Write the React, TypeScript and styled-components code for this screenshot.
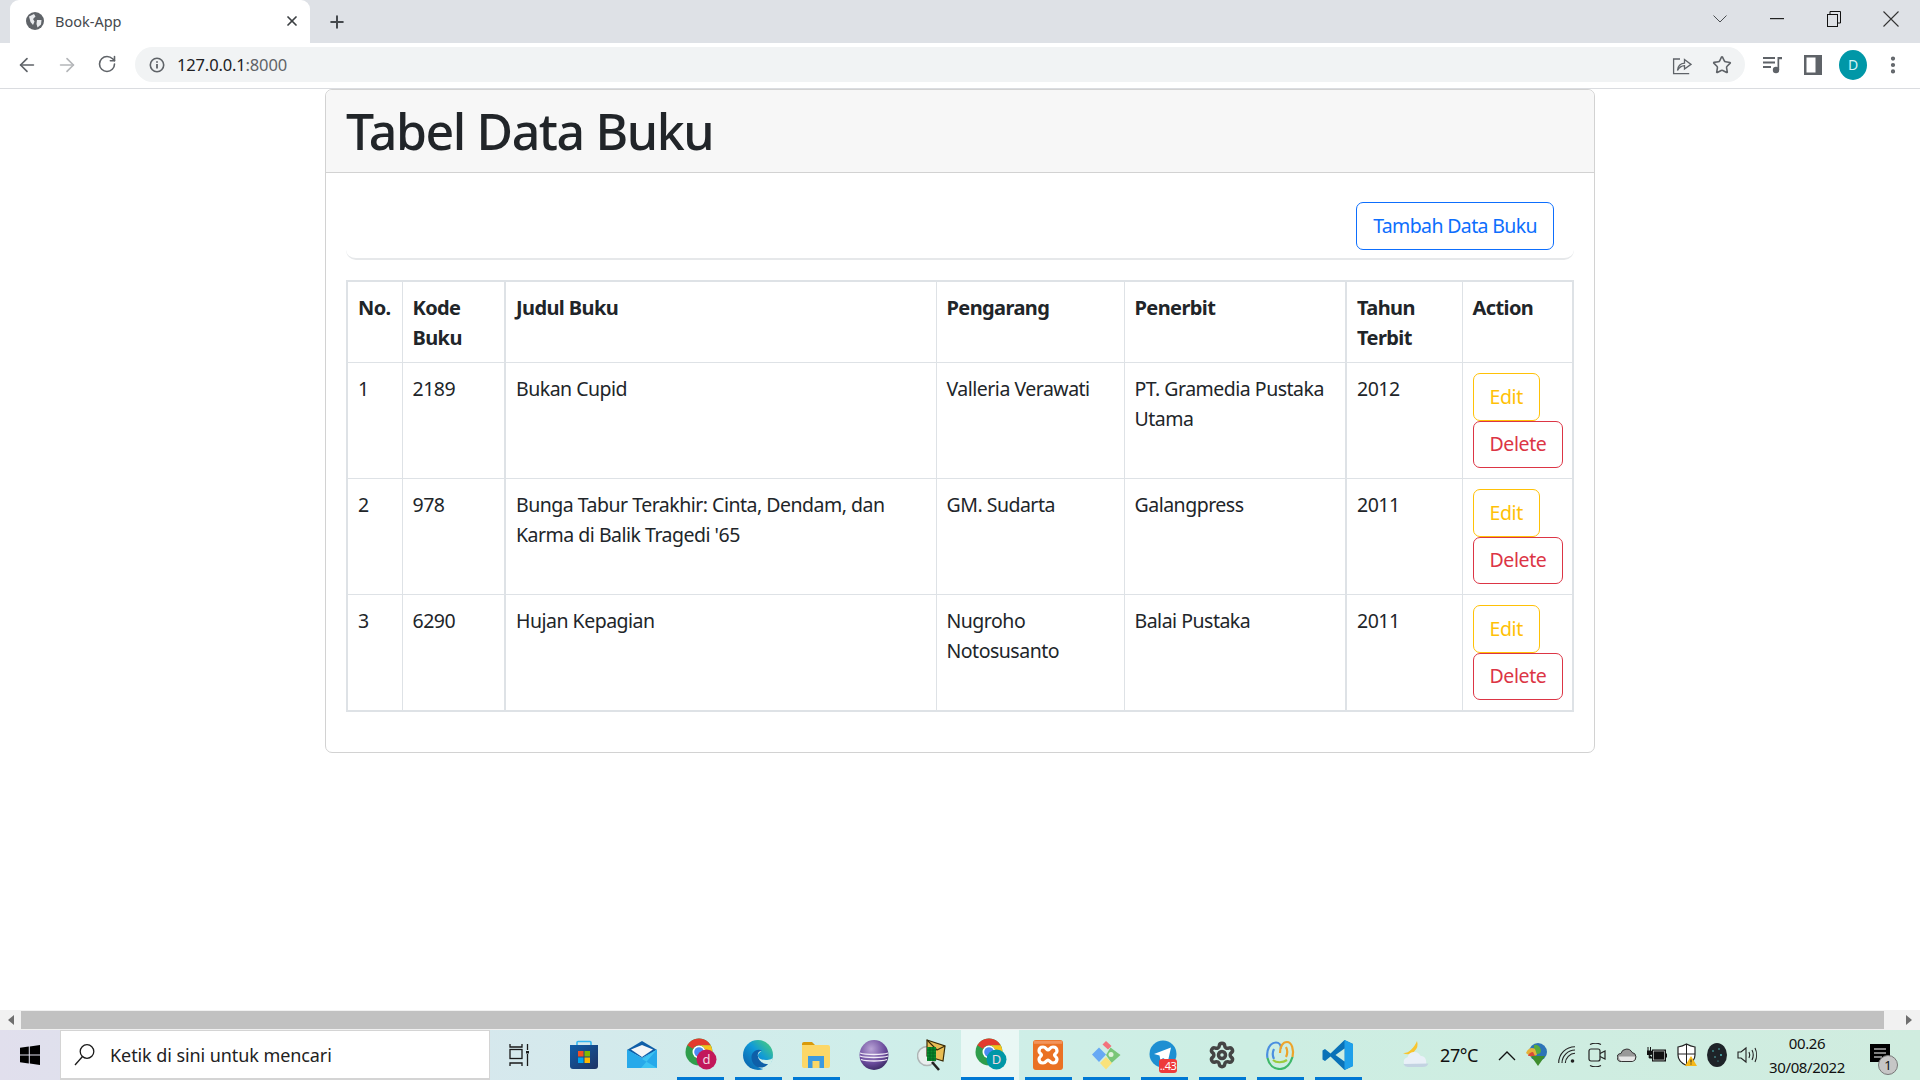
import React from "react";
import styled, { createGlobalStyle } from "styled-components";
import { ArrowLeft, ArrowRight, RotateCw, Star, MoreVertical, Plus, X, Settings } from "lucide-react";

const UI = `"Noto Sans", "Open Sans", "Liberation Sans", sans-serif`;

const Global = createGlobalStyle`
  html, body { margin: 0; padding: 0; height: 100%; overflow: hidden; background: #fff; }
  #root { height: 100%; }
  * { box-sizing: border-box; }
`;

const Screen = styled.div`
  width: 1920px;
  height: 1080px;
  display: flex;
  flex-direction: column;
  font-family: ${UI};
  color: #212529;
  overflow: hidden;
`;

/* ---------- browser chrome ---------- */
const TabStrip = styled.div`
  height: 43px;
  flex: none;
  background: #dee1e6;
  display: flex;
  align-items: flex-end;
  padding-left: 10px;
`;
const Tab = styled.div`
  width: 300px;
  height: 43px;
  background: #fff;
  border-radius: 9px 9px 0 0;
  display: flex;
  align-items: center;
  padding: 0 10px 2px 16px;
  gap: 11px;
  font-size: 14.5px;
  letter-spacing: 0;
  color: #45494d;
`;
const TabTitle = styled.span`
  flex: 1;
`;
const NewTab = styled.div`
  margin-left: 17px;
  height: 43px;
  width: 22px;
  display: flex;
  align-items: center;
  color: #45494d;
`;
const WindowControls = styled.div`
  margin-left: auto;
  height: 38px;
  align-self: flex-start;
  display: flex;
  align-items: center;
  color: #2c2c2c;
`;
const WinButton = styled.div<{ $w: number }>`
  width: ${(p) => p.$w}px;
  display: flex;
  justify-content: center;
  align-items: center;
`;
const Toolbar = styled.div`
  height: 46px;
  flex: none;
  background: #fff;
  border-bottom: 1px solid #dadce0;
  display: flex;
  align-items: center;
  padding: 0 15px 2px 0;
  color: #5f6368;
`;
const NavButton = styled.div<{ $w: number; $dim?: boolean }>`
  width: ${(p) => p.$w}px;
  flex: none;
  display: flex;
  justify-content: center;
  color: ${(p) => (p.$dim ? "#b4b6b9" : "#5f6368")};
`;
const NavGroup = styled.div`
  width: 135px;
  flex: none;
  display: flex;
  padding-left: 7px;
`;
const Omnibox = styled.div`
  width: 1610px;
  height: 35px;
  flex: none;
  background: #f1f3f4;
  border-radius: 18px;
  display: flex;
  align-items: center;
  padding: 0 3px 0 14px;
`;
const Url = styled.div`
  margin-left: 12px;
  flex: 1;
  font-size: 16.5px;
  letter-spacing: -0.15px;
  color: #202124;
`;
const UrlPort = styled.span`
  color: #5f6368;
`;
const OmniAction = styled.div`
  width: 40px;
  display: flex;
  justify-content: center;
`;
const ToolGroup = styled.div`
  flex: 1;
  display: flex;
  align-items: center;
  padding-left: 8px;
`;
const ToolSlot = styled.div`
  width: 40px;
  display: flex;
  justify-content: center;
  align-items: center;
`;
const Avatar = styled.div`
  width: 28px;
  height: 30px;
  border-radius: 50%;
  background: #0097a7;
  color: #d7f3f6;
  font-size: 14px;
  display: flex;
  align-items: center;
  justify-content: center;
`;

/* ---------- page ---------- */
const Page = styled.main`
  flex: 1;
  min-height: 0;
  background: #fff;
  overflow: hidden;
`;
const Card = styled.section`
  width: 1270px;
  margin: 0 auto;
  height: 664px;
  border: 1px solid #d2d2d2;
  border-radius: 7px;
`;
const CardHeader = styled.header`
  height: 83px;
  background: #f7f7f7;
  border-bottom: 1px solid #d2d2d2;
  border-radius: 7px 7px 0 0;
  padding: 11px 20px 0;
`;
const Title = styled.h1`
  margin: 0;
  font-size: 50px;
  line-height: 60px;
  font-weight: 500;
  letter-spacing: -1.4px;
  color: #212529;
`;
const CardBody = styled.div`
  padding: 19px 20px 0;
`;
const ActionBar = styled.div`
  height: 68px;
  border-bottom: 2px solid #e6e8ea;
  border-radius: 0 0 10px 10px;
  padding: 10px 20px 0;
  display: flex;
  justify-content: flex-end;
  margin-bottom: 20px;
`;
const Btn = styled.button<{ $color: string }>`
  display: block;
  height: 47.5px;
  padding: 0 16px;
  border: 1px solid ${(p) => p.$color};
  border-radius: 7px;
  background: transparent;
  color: ${(p) => p.$color};
  font-family: ${UI};
  font-size: 19.5px;
  letter-spacing: -0.4px;
  line-height: 30px;
`;
const AddBtn = styled(Btn)`
  letter-spacing: -0.63px;
`;
const Table = styled.table`
  width: 1226px;
  table-layout: fixed;
  border-collapse: collapse;
  border: 2px solid #dee2e6;
  font-size: 19.5px;
  line-height: 30px;
  letter-spacing: -0.5px;
`;
const Th = styled.th<{ $thick?: boolean }>`
  text-align: left;
  vertical-align: top;
  font-size: 20px;
  font-weight: 700;
  letter-spacing: -0.6px;
  padding: 11px 10px 9px 10px;
  border: 1px solid #dee2e6;
  border-left-width: ${(p) => (p.$thick ? 2 : 1)}px;
`;
const Td = styled.td<{ $thick?: boolean }>`
  vertical-align: top;
  font-weight: 400;
  padding: 11px 10px 9px;
  height: 116px;
  border: 1px solid #dee2e6;
  border-left-width: ${(p) => (p.$thick ? 2 : 1)}px;
`;
const RowActions = styled.div`
  display: flex;
  flex-direction: column;
  align-items: flex-start;
  margin-top: -1px;
`;

/* ---------- scrollbar ---------- */
const HScroll = styled.div`
  height: 20px;
  flex: none;
  background: #f1f1f1;
  display: flex;
  align-items: center;
`;
const ScrollEnd = styled.div`
  width: 21px;
  flex: none;
  display: flex;
  justify-content: center;
  color: #6e6e6e;
`;
const ScrollRight = styled(ScrollEnd)`
  width: 36px;
  padding-left: 14px;
`;
const Thumb = styled.div`
  flex: 1;
  height: 18px;
  background: #c1c1c1;
`;

/* ---------- taskbar ---------- */
const Taskbar = styled.footer`
  height: 50px;
  flex: none;
  display: flex;
  align-items: stretch;
  background: linear-gradient(90deg, #e1dfed 0%, #d6e8ed 25%, #cfeeea 45%, #cdeee3 65%, #d0ecdf 100%);
  color: #111;
`;
const StartButton = styled.div`
  width: 60px;
  flex: none;
  display: flex;
  align-items: center;
  justify-content: center;
`;
const SearchBox = styled.div`
  width: 430px;
  flex: none;
  background: #fff;
  border: 1px solid #d4d4d4;
  border-bottom-width: 2px;
  display: flex;
  align-items: center;
  padding-left: 13px;
  gap: 15px;
  font-size: 18px;
  letter-spacing: -0.08px;
  color: #222;
`;
const TaskView = styled.div`
  width: 65px;
  flex: none;
  display: flex;
  align-items: center;
  justify-content: center;
  padding-right: 7px;
`;
const Slot = styled.div<{ $open?: boolean; $active?: boolean }>`
  position: relative;
  width: 58px;
  flex: none;
  display: flex;
  align-items: center;
  justify-content: center;
  padding-bottom: 1px;
  background: ${(p) => (p.$active ? "rgba(255,255,255,.55)" : "transparent")};
  &::after {
    content: "";
    display: ${(p) => (p.$open ? "block" : "none")};
    position: absolute;
    left: ${(p) => (p.$active ? 0 : 6)}px;
    right: 5px;
    bottom: 0;
    height: 3px;
    background: #0078d4;
  }
`;
const Tray = styled.div`
  margin-left: auto;
  display: flex;
  align-items: center;
`;
const Weather = styled.div`
  display: flex;
  align-items: center;
  gap: 11px;
  width: 92px;
  padding-left: 1px;
  font-size: 18px;
  letter-spacing: -0.4px;
`;
const TrayIcon = styled.div`
  width: 30px;
  display: flex;
  justify-content: center;
  align-items: center;
  flex: none;
`;
const Clock = styled.div`
  width: 90px;
  text-align: center;
  font-size: 15px;
  line-height: 24px;
  letter-spacing: -0.4px;
`;
const Notify = styled.div`
  width: 68px;
  height: 24px;
  position: relative;
  display: flex;
  justify-content: center;
  padding-right: 12px;
`;
const NotifyBadge = styled.span`
  position: absolute;
  left: 26px;
  top: 12px;
  width: 20px;
  height: 20px;
  border-radius: 50%;
  background: #c6c6c6;
  border: 1px solid #777;
  font-size: 13px;
  line-height: 18px;
  text-align: center;
  color: #111;
`;

/* ---------- drawings ---------- */
const Globe = () => (
  <svg width="18" height="18" viewBox="0 0 18 18">
    <circle cx="9" cy="9" r="9" fill="#5f6368" />
    <path d="M3 4.5 L8 2 L9.5 4.5 L7 7 L8.5 9.5 L7 13 L4.5 10 Z M11 8 L15.5 8 L15 12.5 L11.5 15.5 L10.5 12 Z" fill="#e8eaed" />
  </svg>
);
const InfoIcon = () => (
  <svg width="16" height="16" viewBox="0 0 16 16" fill="none" stroke="#5f6368">
    <circle cx="8" cy="8" r="6.7" strokeWidth="1.6" />
    <path d="M8 7v4.6M8 4.2v1.6" strokeWidth="1.8" />
  </svg>
);
const ShareIcon = () => (
  <svg width="20" height="20" viewBox="0 0 20 20" fill="none" stroke="#5f6368" strokeWidth="1.3">
    <path d="M8 4H1.6v14.6h15.6" />
    <path d="M5.5 15.5c.4-4.5 3-7 7-7.3V4.6l6.5 4.8-6.5 4.6v-3.3c-3 .1-5 1.400-7 4.800z" />
  </svg>
);
const MediaIcon = () => (
  <svg width="20" height="18" viewBox="0 0 20 18" fill="#5f6368">
    <rect x="0" y="1" width="12" height="2" />
    <rect x="0" y="5.500" width="12" height="2" />
    <rect x="0" y="10" width="8" height="2" />
    <circle cx="13" cy="14" r="3.200" />
    <path d="M14.500 14V1H19V3.200H16.200V14z" />
  </svg>
);
const PanelIcon = () => (
  <svg width="18" height="20" viewBox="0 0 18 20">
    <rect width="18" height="20" fill="#5f6368" />
    <rect x="2.500" y="2.500" width="9" height="15" fill="#fff" />
  </svg>
);
const Chevron = () => (
  <svg width="14" height="8" viewBox="0 0 14 8" fill="none" stroke="#4a4d51">
    <path d="M.5.5 7 7 13.500.5" />
  </svg>
);
const MinIcon = () => (
  <svg width="14" height="2" viewBox="0 0 14 2"><rect width="14" height="1.200" fill="#222" /></svg>
);
const MaxIcon = () => (
  <svg width="14" height="16" viewBox="0 0 14 16" fill="none" stroke="#111" strokeWidth="1">
    <rect x=".5" y="3.500" width="10" height="12" fill="none" />
    <path d="M3 3.500V.5h10.500v11.500h-3" />
  </svg>
);
const CloseIcon = () => (
  <svg width="16" height="16" viewBox="0 0 16 16" fill="none" stroke="#333" strokeWidth="1.100">
    <path d="M.5.5l15 15M15.500.5l-15 15" />
  </svg>
);
const ArrowGlyph = ({ right }: { right?: boolean }) => (
  <svg width="6" height="10" viewBox="0 0 6 10" fill="currentColor">
    <path d={right ? "M0 0l6 5-6 5z" : "M6 0L0 5l6 5z"} />
  </svg>
);
const WinLogo = () => (
  <svg width="20" height="20" viewBox="0 0 20 20" fill="#000">
    <path d="M0 2.800 8.800 1.500V9.400H0zM9.800 1.400 20 0V9.400H9.800zM0 10.500H8.800V18.400L0 17.200zM9.800 10.500H20V20L9.800 18.500z" />
  </svg>
);
const SearchGlyph = () => (
  <svg width="21" height="24" viewBox="0 0 21 24" fill="none" stroke="#1a1a1a" strokeWidth="1.300">
    <circle cx="13" cy="8.500" r="6.800" />
    <path d="M8.500 13.500 1 22" />
  </svg>
);
const TaskViewGlyph = () => (
  <svg width="20" height="24" viewBox="0 0 20 24" fill="none" stroke="#1a1a1a" strokeWidth="1.300">
    <rect x="1" y="6.500" width="12" height="9" />
    <path d="M1 1v3h12V1M1 23v-3h12v3M18.500 1v6M18.500 11v12" />
    <rect x="17" y="8" width="3" height="2.500" fill="#1a1a1a" stroke="none" />
  </svg>
);
const StoreIcon = () => (
  <svg width="30" height="30" viewBox="0 0 30 30">
    <path d="M8 6V2.500a1 1 0 0 1 1-1h12a1 1 0 0 1 1 1V6" fill="none" stroke="#35b6f0" strokeWidth="1.600" />
    <defs><linearGradient id="st" x1="0" y1="0" x2="1" y2="1"><stop offset="0" stopColor="#0f5ea8" /><stop offset="1" stopColor="#1e3364" /></linearGradient></defs>
    <path d="M1 5h28v21a3 3 0 0 1-3 3H4a3 3 0 0 1-3-3z" fill="url(#st)" />
    <rect x="9" y="11" width="5.500" height="5.500" fill="#f25022" />
    <rect x="15.500" y="11" width="5.500" height="5.500" fill="#7fba00" />
    <rect x="9" y="17.500" width="5.500" height="5.500" fill="#00a4ef" />
    <rect x="15.500" y="17.500" width="5.500" height="5.500" fill="#ffb900" />
  </svg>
);
const MailIcon = () => (
  <svg width="30" height="30" viewBox="0 0 30 30">
    <path d="M15 1 30 10 15 18 0 10z" fill="#0f5ea8" />
    <path d="M4 9.500 15 5 26 9.500 15 17z" fill="#f4f6f8" />
    <path d="M0 9.500 15 18 30 9.500V28H0z" fill="#27a9ea" />
    <path d="M30 9.500 15 19 30 28H14z" fill="#3dc3f2" />
  </svg>
);
const ChromeIcon = ({ letter, badge }: { letter: string; badge: string }) => (
  <svg width="33" height="33" viewBox="-1 0 33 33">
    <circle cx="14" cy="14" r="13.500" fill="#2f9e4c" />
    <path d="M2.300 7.300A13.500 13.500 0 0 1 25.700 7.300H14a7 7 0 0 0-6.100 3.500z" fill="#e33b2e" />
    <path d="M25.700 7.300A13.500 13.500 0 0 1 14 27.500L20 17a7 7 0 0 0-6-9.700z" fill="#f9c21a" />
    <circle cx="14" cy="14" r="6.500" fill="#fff" />
    <circle cx="14" cy="14" r="4.800" fill="#4a8af4" />
    <circle cx="21.500" cy="21.500" r="10" fill={badge} />
    <text x="21.500" y="26" fontSize="13" textAnchor="middle" fill="#f2d9e2" fontFamily="Noto Sans, sans-serif">{letter}</text>
  </svg>
);
const EdgeIcon = () => (
  <svg width="30" height="30" viewBox="0 0 30 30">
    <defs>
      <linearGradient id="ed" x1="0" y1="1" x2="1" y2="0"><stop offset="0" stopColor="#0a5aa5" /><stop offset=".55" stopColor="#109ad8" /><stop offset="1" stopColor="#54d66b" /></linearGradient>
    </defs>
    <circle cx="15" cy="15" r="15" fill="url(#ed)" />
    <path d="M30 17c0 2-3.500 3-7 3-3.500 0-8-1-8-4.500 0-2 2-3.500 3.500-4-4.500-1-9 1.500-9 6.500 0 5 5 10.500 11 11 4.500-.5 8-4 9.500-12z" fill="#cfeeea" />
    <path d="M21 27c-6 2-12-1.500-12.500-9C8 12 14 8 19 10.500c-3 .3-4.500 2.500-4.200 5 .4 5 4.500 8.500 10.200 8.500-1 1.200-2.400 2.300-4 3z" fill="#0e5fa8" />
  </svg>
);
const FolderIcon = () => (
  <svg width="28" height="26" viewBox="0 0 28 26">
    <path d="M0 2a2 2 0 0 1 2-2h8l3 3H0z" fill="#d99a0a" />
    <path d="M0 3h26a2 2 0 0 1 2 2v19a2 2 0 0 1-2 2H2a2 2 0 0 1-2-2z" fill="#fcd767" />
    <path d="M6 26V14h16v12h-4.500v-7h-7v7z" fill="#3c9ae0" />
  </svg>
);
const EclipseIcon = () => (
  <svg width="30" height="30" viewBox="0 0 30 30">
    <defs>
      <radialGradient id="ec" cx=".4" cy=".3" r=".8"><stop offset="0" stopColor="#b9a4d6" /><stop offset=".6" stopColor="#6a4b9c" /><stop offset="1" stopColor="#2f2255" /></radialGradient>
    </defs>
    <ellipse cx="15" cy="15" rx="14.500" ry="15" fill="url(#ec)" />
    <path d="M1 13c6 2 22 2 28 0M.8 16c6 2 22 2 28.400 0M2 19.500c6 2 20 2 26 0" fill="none" stroke="#f2edf8" strokeWidth="1.300" />
  </svg>
);
const MagMailIcon = () => (
  <svg width="30" height="32" viewBox="0 0 30 32">
    <circle cx="10" cy="17" r="9.500" fill="#e9eeee" stroke="#aeb5b5" strokeWidth="1.500" />
    <path d="M15 23 22 31" stroke="#222" strokeWidth="2.500" />
    <path d="M10 1 28 7 26 22 10 17z" fill="#e8bd54" stroke="#3a2c08" strokeWidth="1.200" />
    <path d="M10 1 20 11 28 7" fill="none" stroke="#3a2c08" strokeWidth="1.200" />
    <path d="M10 8h9v14h-9z" fill="#0a8a2a" />
    <path d="M10 11h9M10 14h9M10 17h9M10 20h9M13 8v14M16 8v14" stroke="#062" strokeWidth="1" />
  </svg>
);
const XamppIcon = () => (
  <svg width="30" height="30" viewBox="0 0 30 30">
    <rect width="30" height="30" rx="3" fill="#ea7124" />
    <rect x=".8" y=".8" width="28.400" height="3" fill="#f2935a" />
    <path d="M10 7c3 0 3.500 3 5 3s2-3 5-3 4 2 4 4-2.500 3-2.500 4 2.500 2 2.500 4-1 4-4 4-3.500-3-5-3-2 3-5 3-4-2-4-4 2.500-3 2.500-4S6 13 6 11s1-4 4-4z" fill="none" stroke="#fff" strokeWidth="3.200" />
  </svg>
);
const DiamondIcon = () => (
  <svg width="30" height="30" viewBox="0 0 30 30">
    <path d="M15 1 20.500 6 17 9.500 11.500 4.500z" fill="#f3727c" />
    <path d="M8 7.500 15 14.500 8 22 1 14.500z" fill="#67a9f4" />
    <path d="M19.500 7.500 29.500 15 20.500 23 15 15z" fill="#79c678" />
    <circle cx="20" cy="14.500" r="2.500" fill="#e0f2dc" />
    <path d="M15 17 21 23 15 29.500 9 23z" fill="#f9e27a" />
  </svg>
);
const TelegramIcon = () => (
  <svg width="30" height="30" viewBox="0 0 30 30">
    <circle cx="14" cy="14" r="13.500" fill="#1e8fd2" />
    <path d="M5 14 22 7.500 19 21l-5-3-2.500 2.500-1-5z" fill="#fff" />
  </svg>
);
const TgBadge = styled.span`
  position: absolute;
  left: 24px;
  top: 29px;
  width: 18px;
  height: 14px;
  border-radius: 3px;
  background: #ee3b3b;
  color: #fff;
  font-size: 11px;
  line-height: 14px;
  text-align: center;
  letter-spacing: -0.5px;
`;
const RingsIcon = () => (
  <svg width="30" height="30" viewBox="0 0 30 30" fill="none" strokeWidth="2.200">
    <path d="M2.500 18C1 10 5 2.500 11 2.500c3 0 5 2.500 5 6" stroke="#4a8fe0" />
    <path d="M9 9c-1.500 3-1.500 7 0 10" stroke="#4a8fe0" />
    <path d="M15 13C15 6 18 2 22 2c5 0 7 8 5.500 15" stroke="#eda42c" />
    <path d="M21 7c1.500 3 1.500 7 0 10" stroke="#eda42c" />
    <path d="M2.500 18C4 25 9 29 15 29s10-4 12.500-12" stroke="#3fb86a" />
    <path d="M8 20c3 3 10 3 14 0" stroke="#9ccb3f" />
  </svg>
);
const VSCodeIcon = () => (
  <svg width="32" height="32" viewBox="0 0 32 32">
    <path d="M22.500 1 31 5v22l-8.500 4-14-13.500L3 22l-2.500-1.500V11.500L3 10l5.500 4.500z" fill="#0a72b8" />
    <path d="M22.500 1 31 5v22l-8.500 4z" fill="#1fa0ea" />
    <path d="M22.500 9.500 13.500 16l9 6.500z" fill="#cdeee3" />
  </svg>
);
const WeatherIcon = () => (
  <svg width="28" height="30" viewBox="0 0 28 30">
    <path d="M16 1A10 10 0 0 1 2 13c5 1 11-5 14-12z" fill="#f9c52f" />
    <path d="M7 27a5 5 0 0 1-.5-9.800 7 7 0 0 1 13-1.500A6 6 0 0 1 22 27z" fill="#e9f0f8" />
    <path d="M2.500 24a5 5 0 0 0 4.500 3h15a6 6 0 0 0 5.500-3.500z" fill="#c3d3e2" />
  </svg>
);
const CaretUp = () => (
  <svg width="18" height="11" viewBox="0 0 18 11" fill="none" stroke="#111" strokeWidth="1.300">
    <path d="M1 10 9 2l8 8" />
  </svg>
);
const IdmIcon = () => (
  <svg width="22" height="24" viewBox="0 0 22 24">
    <circle cx="12" cy="9" r="9" fill="#2d74b8" />
    <path d="M8 2c4-1 7 3 7 6s-4 4-7 2z" fill="#5aaa3c" />
    <path d="M0 10c2-5 6-6 9-4l2 6-6 2z" fill="#e4b23a" />
    <path d="M2 13c1-3 3-4 5-4l2 4z" fill="#d8483a" />
    <path d="M5 13h14l-7 10z" fill="#3f8d2e" />
  </svg>
);
const WifiIcon = () => (
  <svg width="18" height="18" viewBox="0 0 18 18" fill="none" stroke="#222" strokeWidth="1.100">
    <path d="M.7 17C.7 8 8 .7 17 .7M4 17C4 10 10 4 17 4M7.300 17c0-5 4.700-9.700 9.700-9.700" />
    <circle cx="14.500" cy="15" r="1.800" fill="#222" stroke="none" />
  </svg>
);
const MeetIcon = () => (
  <svg width="18" height="24" viewBox="0 0 18 24" fill="none" stroke="#222" strokeWidth="1.200">
    <path d="M2 1.500C6-.5 9-.5 13 1.500M2 22.500c4 2 7 2 11 0" />
    <rect x="1" y="6" width="11" height="12" rx="2" />
    <path d="M12 10.500 17 8v8l-5-2.500" />
  </svg>
);
const CloudIcon = () => (
  <svg width="20" height="14" viewBox="0 0 20 14">
    <path d="M4.500 13.500a4 4 0 0 1-.6-8 6 6 0 0 1 11.200-1A4.600 4.600 0 0 1 15.500 13.500z" fill="#999" stroke="#333" strokeWidth="1" />
    <path d="M2 8.500h16v1.500a3.500 3.500 0 0 1-2.500 3H4.500A3.500 3.500 0 0 1 2 10z" fill="#e6e6e6" />
  </svg>
);
const BatteryIcon = () => (
  <svg width="20" height="16" viewBox="0 0 20 16">
    <path d="M1 0v4M3.500 0v4M0 4h4.500v3.500H0zM2.200 7.500V11H6" fill="#111" stroke="#111" strokeWidth="1" />
    <rect x="5.500" y="3" width="13" height="11" fill="#111" stroke="#111" />
    <rect x="6.500" y="4" width="11" height="9" fill="#111" stroke="#f3fbf7" strokeWidth=".6" />
    <rect x="19" y="6.500" width="1" height="4" fill="#111" />
  </svg>
);
const ShieldIcon = () => (
  <svg width="20" height="24" viewBox="0 0 20 24">
    <path d="M9.500 1C6 3 4 3.500 1 4v8c0 5 4 8.500 8.500 10.500C14 20.500 18 17 18 12V4c-3-.5-5-1-8.500-3z" fill="#fff" stroke="#222" strokeWidth="1.200" />
    <path d="M9.500 1v21M1 11h17" stroke="#222" strokeWidth="1" />
    <path d="M14 13l6 10H8z" fill="#f6b817" />
    <path d="M14 16.500v3M14 20.500v1" stroke="#222" strokeWidth="1" />
  </svg>
);
const OrbIcon = () => (
  <svg width="20" height="24" viewBox="0 0 20 24">
    <ellipse cx="10" cy="12" rx="10" ry="12" fill="#1e2328" />
    <circle cx="6" cy="8" r=".8" fill="#5cc" /><circle cx="12" cy="6" r=".7" fill="#6dd" /><circle cx="14" cy="12" r=".9" fill="#5cc" /><circle cx="8" cy="14" r=".7" fill="#6dd" /><circle cx="11" cy="18" r=".6" fill="#5cc" />
  </svg>
);
const SoundIcon = () => (
  <svg width="21" height="18" viewBox="0 0 21 18" fill="none" stroke="#222" strokeWidth="1.100">
    <path d="M1 6h3l5-4v14l-5-4H1z" />
    <path d="M12 6c1 2 1 4 0 6M15 4c1.500 3 1.500 7 0 10M18 2c2 4 2 10 0 14" />
  </svg>
);
const NotifyIcon = () => (
  <svg width="20" height="24" viewBox="0 0 20 24">
    <path d="M0 1h20v18h-6l-4 4v-4H0z" fill="#000" />
    <path d="M4 6h12M4 10h12M4 14h8" stroke="#fff" strokeWidth="1.200" />
  </svg>
);

/* ---------- data ---------- */
const columns = [
  { label: "No.", width: 55 },
  { label: "Kode Buku", width: 103 },
  { label: "Judul Buku", width: 431, thick: true },
  { label: "Pengarang", width: 188 },
  { label: "Penerbit", width: 222 },
  { label: "Tahun Terbit", width: 116, thick: true },
  { label: "Action", width: 111 },
];
const books = [
  ["1", "2189", "Bukan Cupid", "Valleria Verawati", "PT. Gramedia Pustaka Utama", "2012"],
  ["2", "978", "Bunga Tabur Terakhir: Cinta, Dendam, dan Karma di Balik Tragedi '65", "GM. Sudarta", "Galangpress", "2011"],
  ["3", "6290", "Hujan Kepagian", "Nugroho Notosusanto", "Balai Pustaka", "2011"],
];

export default function App() {
  return (
    <Screen>
      <Global />
      <TabStrip>
        <Tab>
          <Globe />
          <TabTitle>Book-App</TabTitle>
          <X size={16} strokeWidth={2.6} color="#3c4043" />
        </Tab>
        <NewTab><Plus size={20} strokeWidth={2.4} /></NewTab>
        <WindowControls>
          <WinButton $w={56}><Chevron /></WinButton>
          <WinButton $w={58}><MinIcon /></WinButton>
          <WinButton $w={56}><MaxIcon /></WinButton>
          <WinButton $w={58}><CloseIcon /></WinButton>
        </WindowControls>
      </TabStrip>
      <Toolbar>
        <NavGroup>
          <NavButton $w={40}><ArrowLeft size={22} strokeWidth={1.8} /></NavButton>
          <NavButton $w={40} $dim><ArrowRight size={22} strokeWidth={1.8} /></NavButton>
          <NavButton $w={40}><RotateCw size={20} strokeWidth={1.9} /></NavButton>
        </NavGroup>
        <Omnibox>
          <InfoIcon />
          <Url>127.0.0.1<UrlPort>:8000</UrlPort></Url>
          <OmniAction><ShareIcon /></OmniAction>
          <OmniAction><Star size={20} strokeWidth={1.9} /></OmniAction>
        </Omnibox>
        <ToolGroup>
          <ToolSlot><MediaIcon /></ToolSlot>
          <ToolSlot><PanelIcon /></ToolSlot>
          <ToolSlot><Avatar>D</Avatar></ToolSlot>
          <ToolSlot><MoreVertical size={22} strokeWidth={2.600} /></ToolSlot>
        </ToolGroup>
      </Toolbar>

      <Page>
        <Card>
          <CardHeader><Title>Tabel Data Buku</Title></CardHeader>
          <CardBody>
            <ActionBar><AddBtn $color="#0d6efd">Tambah Data Buku</AddBtn></ActionBar>
            <Table>
              <colgroup>
                {columns.map((c) => <col key={c.label} width={c.width} />)}
              </colgroup>
              <thead>
                <tr>{columns.map((c) => <Th key={c.label} $thick={c.thick}>{c.label}</Th>)}</tr>
              </thead>
              <tbody>
                {books.map((b) => (
                  <tr key={b[0]}>
                    {b.map((v, i) => <Td key={i} $thick={columns[i].thick}>{v}</Td>)}
                    <Td>
                      <RowActions>
                        <Btn $color="#ffc107">Edit</Btn>
                        <Btn $color="#dc3545">Delete</Btn>
                      </RowActions>
                    </Td>
                  </tr>
                ))}
              </tbody>
            </Table>
          </CardBody>
        </Card>
      </Page>

      <HScroll>
        <ScrollEnd><ArrowGlyph /></ScrollEnd>
        <Thumb />
        <ScrollRight><ArrowGlyph right /></ScrollRight>
      </HScroll>

      <Taskbar>
        <StartButton><WinLogo /></StartButton>
        <SearchBox><SearchGlyph /><span>Ketik di sini untuk mencari</span></SearchBox>
        <TaskView><TaskViewGlyph /></TaskView>
        <Slot><StoreIcon /></Slot>
        <Slot><MailIcon /></Slot>
        <Slot $open><ChromeIcon letter="d" badge="#c2185b" /></Slot>
        <Slot $open><EdgeIcon /></Slot>
        <Slot $open><FolderIcon /></Slot>
        <Slot><EclipseIcon /></Slot>
        <Slot><MagMailIcon /></Slot>
        <Slot $open $active><ChromeIcon letter="D" badge="#0097a7" /></Slot>
        <Slot $open><XamppIcon /></Slot>
        <Slot $open><DiamondIcon /></Slot>
        <Slot $open><TelegramIcon /><TgBadge>..43</TgBadge></Slot>
        <Slot $open><Settings size={28} strokeWidth={3} color="#444" /></Slot>
        <Slot $open><RingsIcon /></Slot>
        <Slot $open><VSCodeIcon /></Slot>
        <Tray>
          <Weather><WeatherIcon /><span>27°C</span></Weather>
          <TrayIcon><CaretUp /></TrayIcon>
          <TrayIcon><IdmIcon /></TrayIcon>
          <TrayIcon><WifiIcon /></TrayIcon>
          <TrayIcon><MeetIcon /></TrayIcon>
          <TrayIcon><CloudIcon /></TrayIcon>
          <TrayIcon><BatteryIcon /></TrayIcon>
          <TrayIcon><ShieldIcon /></TrayIcon>
          <TrayIcon><OrbIcon /></TrayIcon>
          <TrayIcon><SoundIcon /></TrayIcon>
          <Clock>00.26<br />30/08/2022</Clock>
          <Notify><NotifyIcon /><NotifyBadge>1</NotifyBadge></Notify>
        </Tray>
      </Taskbar>
    </Screen>
  );
}
